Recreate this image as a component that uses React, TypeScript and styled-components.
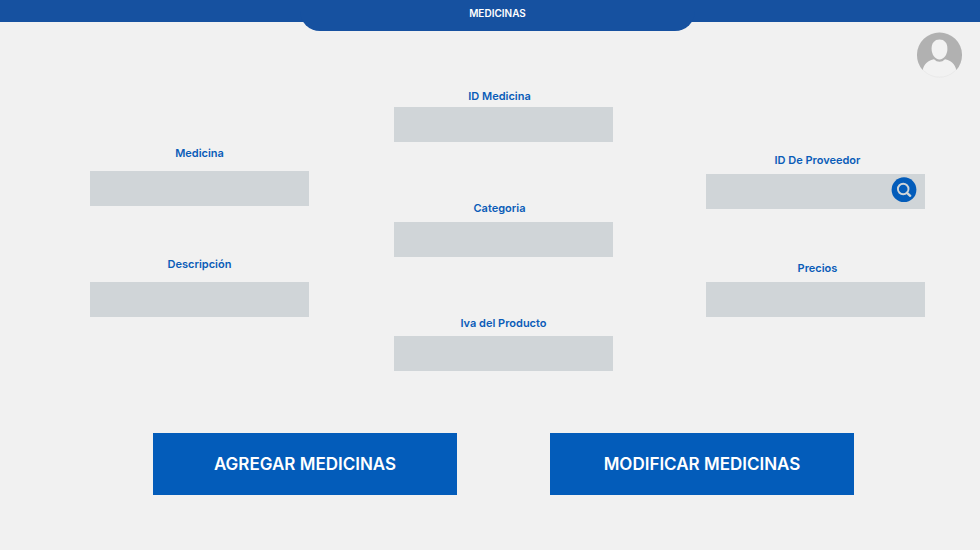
import React, { useId } from "react";
import styled, { createGlobalStyle } from "styled-components";

const GlobalStyle = createGlobalStyle`
  *, *::before, *::after { box-sizing: border-box; }
  body {
    margin: 0;
    background: #f1f1f1;
    font-family: Inter, "Open Sans", sans-serif;
  }
  button, input { font-family: inherit; }
`;

const Header = styled.header`
  display: flex;
  justify-content: center;
  height: 22px;
  padding-left: 15px;
  background: #1651a0;
`;

const Title = styled.h1`
  width: 41%;
  height: 31px;
  margin: 0;
  border-radius: 0 0 20px 20px;
  background: #1651a0;
  color: #fff;
  font-size: 10px;
  font-weight: 600;
  line-height: 27px;
  text-align: center;
`;

const AccountRow = styled.div`
  display: flex;
  justify-content: flex-end;
  padding: 10px 18px 0;
`;

const AvatarButton = styled.button`
  width: 45px;
  height: 46px;
  padding: 0;
  border: 0;
  background: none;
  cursor: pointer;

  svg { display: block; }
`;

const Form = styled.form`
  margin: 0;
`;

const Fields = styled.div`
  display: grid;
  grid-template-columns: 90fr 219fr 85fr 219fr 93fr 219fr 55fr;
  align-items: start;
`;

const Column = styled.div<{ $track: number; $top: number; $gap: number }>`
  grid-column: ${(p) => p.$track};
  display: flex;
  flex-direction: column;
  gap: ${(p) => p.$gap}px;
  min-width: 0;
  padding-top: ${(p) => p.$top}px;
`;

const FieldBox = styled.div<{ $gap: number }>`
  display: flex;
  flex-direction: column;
  gap: ${(p) => p.$gap}px;
`;

const Label = styled.label<{ $lean?: "left" | "right" }>`
  padding-right: ${(p) => (p.$lean === "left" ? 8 : 0)}px;
  padding-left: ${(p) => (p.$lean === "right" ? 4 : 0)}px;
  color: #0a5cb8;
  font-size: 11px;
  font-weight: 600;
  line-height: 16px;
  text-align: center;
`;

const Control = styled.div`
  position: relative;
  display: flex;
`;

const TextInput = styled.input`
  width: 100%;
  min-width: 0;
  height: 35px;
  padding: 0 10px;
  border: 0;
  border-radius: 0;
  background: #d0d5d8;
  color: #1651a0;
  font-size: 13px;
`;

const SearchButton = styled.button`
  position: absolute;
  top: 3px;
  right: 8px;
  width: 26px;
  height: 26px;
  padding: 0;
  border: 0;
  background: none;
  cursor: pointer;

  svg { display: block; }
`;

const Actions = styled.div`
  display: grid;
  grid-template-columns: 153fr 304fr 93fr 304fr 126fr;
  padding: 62px 0 55px;
`;

const ActionButton = styled.button<{ $track: number }>`
  grid-column: ${(p) => p.$track};
  min-width: 0;
  height: 62px;
  padding: 0;
  border: 0;
  background: #035cba;
  color: #fff;
  font-size: 17px;
  font-weight: 600;
  cursor: pointer;
`;

function AvatarIcon() {
  return (
    <svg width="45" height="46" viewBox="0 0 45 46" aria-hidden="true">
      <circle cx="22.5" cy="22.9" r="22.3" fill="#f2f2f2" stroke="#e0e0e0" strokeWidth="0.5" />
      <path
        d="M5.7 38A22.5 22.5 0 1 1 39.3 38C38.3 32 33.5 28.2 28 27.2Q25.5 29.800 22.500 29.800Q19.500 29.800 17 27.200C11.500 28.200 6.700 32 5.700 38Z"
        fill="#b1b1b1"
      />
      <path
        d="M22.500 7.600C17.600 7.600 14.600 11 14.600 16.700C14.600 22.500 18 27.400 22.500 27.400C27 27.400 30.400 22.500 30.400 16.700C30.400 11 27.400 7.600 22.500 7.600Z"
        fill="#f2f2f2"
      />
    </svg>
  );
}

function SearchIcon() {
  return (
    <svg width="26" height="26" viewBox="0 0 26 26" aria-hidden="true">
      <circle cx="13" cy="12.7" r="12.4" fill="#035cba" />
      <circle cx="12.2" cy="12" r="5.3" fill="none" stroke="#d0d5d8" strokeWidth="1.9" />
      <path d="M16 15.8L19.2 18.800" stroke="#d0d5d8" strokeWidth="2.4" strokeLinecap="round" />
    </svg>
  );
}

type FieldProps = {
  label: string;
  gap: number;
  lean?: "left" | "right";
  searchable?: boolean;
};

function Field({ label, gap, lean, searchable }: FieldProps) {
  const id = useId();
  return (
    <FieldBox $gap={gap}>
      <Label htmlFor={id} $lean={lean}>{label}</Label>
      <Control>
        <TextInput id={id} type="text" />
        {searchable && (
          <SearchButton type="button" aria-label="Buscar proveedor">
            <SearchIcon />
          </SearchButton>
        )}
      </Control>
    </FieldBox>
  );
}

export default function App() {
  return (
    <>
      <GlobalStyle />
      <Header>
        <Title>MEDICINAS</Title>
      </Header>
      <main>
        <AccountRow>
          <AvatarButton type="button" aria-label="Cuenta">
            <AvatarIcon />
          </AvatarButton>
        </AccountRow>
        <Form onSubmit={(event) => event.preventDefault()}>
          <Fields>
            <Column $track={2} $top={67} $gap={50}>
              <Field label="Medicina" gap={10} />
              <Field label="Descripción" gap={10} />
            </Column>
            <Column $track={4} $top={10} $gap={58}>
              <Field label="ID Medicina" gap={3} lean="left" />
              <Field label="Categoria" gap={6} lean="left" />
              <Field label="Iva del Producto" gap={5} />
            </Column>
            <Column $track={6} $top={74} $gap={51}>
              <Field label="ID De Proveedor" gap={6} lean="right" searchable />
              <Field label="Precios" gap={6} lean="right" />
            </Column>
          </Fields>
          <Actions>
            <ActionButton type="submit" $track={2}>AGREGAR MEDICINAS</ActionButton>
            <ActionButton type="button" $track={4}>MODIFICAR MEDICINAS</ActionButton>
          </Actions>
        </Form>
      </main>
    </>
  );
}
